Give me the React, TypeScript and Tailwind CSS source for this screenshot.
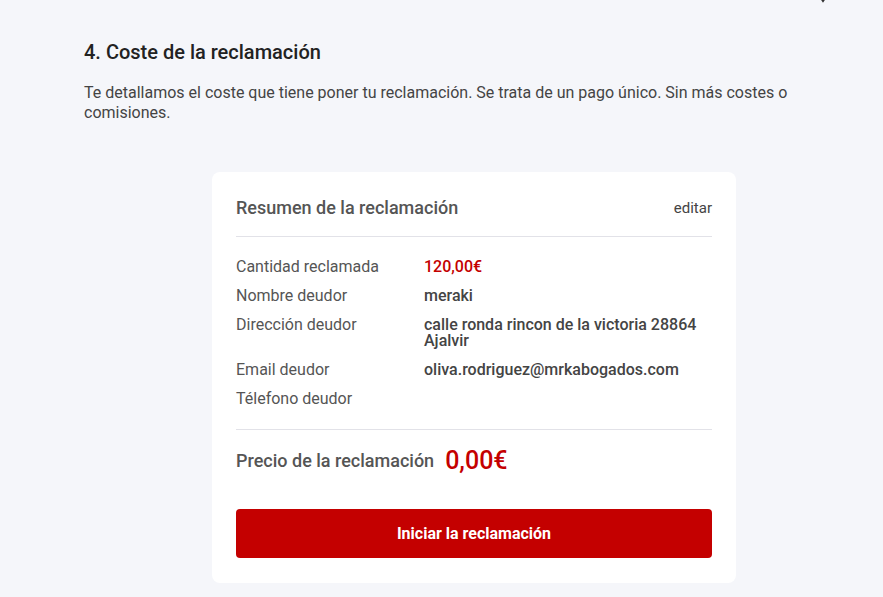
import React from "react";

const rows: { label: string; value: React.ReactNode; red?: boolean }[] = [
  { label: "Cantidad reclamada", value: "120,00€", red: true },
  { label: "Nombre deudor", value: "meraki" },
  {
    label: "Dirección deudor",
    value: (
      <>
        calle ronda rincon de la victoria 28864
        <br />
        Ajalvir
      </>
    ),
  },
  { label: "Email deudor", value: "oliva.rodriguez@mrkabogados.com" },
  { label: "Télefono deudor", value: "" },
];

export default function App() {
  return (
    <div
      className="relative min-h-[597px] w-full overflow-hidden bg-[#f5f6fa]"
      style={{ fontFamily: "Roboto, 'Liberation Sans', sans-serif" }}
    >
      <svg
        className="absolute left-[817px] top-[-7px]"
        width="12"
        height="10"
        viewBox="0 0 12 10"
      >
        <path d="M2 2 L6 8 L10 2" stroke="#333" strokeWidth="2" fill="none" />
      </svg>
      <div className="w-[780px] ml-[84px] pt-[40px] pb-[14px]">
        <h2 className="text-[20px] leading-[24px] font-medium text-[#222]">
          4. Coste de la reclamación
        </h2>
        <p className="mt-[19px] text-[16px] leading-[20px] text-[#444]">
          Te detallamos el coste que tiene poner tu reclamación. Se trata de un pago único. Sin más costes o comisiones.
        </p>
        <div className="mt-[49px] mx-auto w-[524px] rounded-[8px] bg-white px-[24px] pt-[24px] pb-[25px]">
          <div className="flex items-center justify-between">
            <span className="text-[18px] leading-[24px] font-medium text-[#555]">
              Resumen de la reclamación
            </span>
            <span className="text-[15px] leading-[24px] text-[#444]">editar</span>
          </div>
          <div className="mt-[16px] h-px bg-[#e2e2e8]" />
          <div className="mt-[22px] flex flex-col gap-[13px]">
            {rows.map((r) => (
              <div key={r.label} className="flex text-[16px] leading-[16px]">
                <span className="w-[188px] shrink-0 text-[#555]">{r.label}</span>
                <span
                  className={
                    "font-medium " + (r.red ? "text-[#c40000]" : "text-[#444]")
                  }
                >
                  {r.value}
                </span>
              </div>
            ))}
          </div>
          <div className="mt-[22px] h-px bg-[#e2e2e8]" />
          <div className="mt-[15px] flex items-center gap-[11px]">
            <span className="text-[18px] leading-[32px] font-medium text-[#555]">
              Precio de la reclamación
            </span>
            <span className="text-[25px] leading-[32px] font-medium text-[#c40000]">
              0,00€
            </span>
          </div>
          <button className="mt-[32px] flex h-[49px] w-full items-center justify-center rounded-[4px] bg-[#c40000] text-[16px] font-bold text-white">
            Iniciar la reclamación
          </button>
        </div>
      </div>
    </div>
  );
}
